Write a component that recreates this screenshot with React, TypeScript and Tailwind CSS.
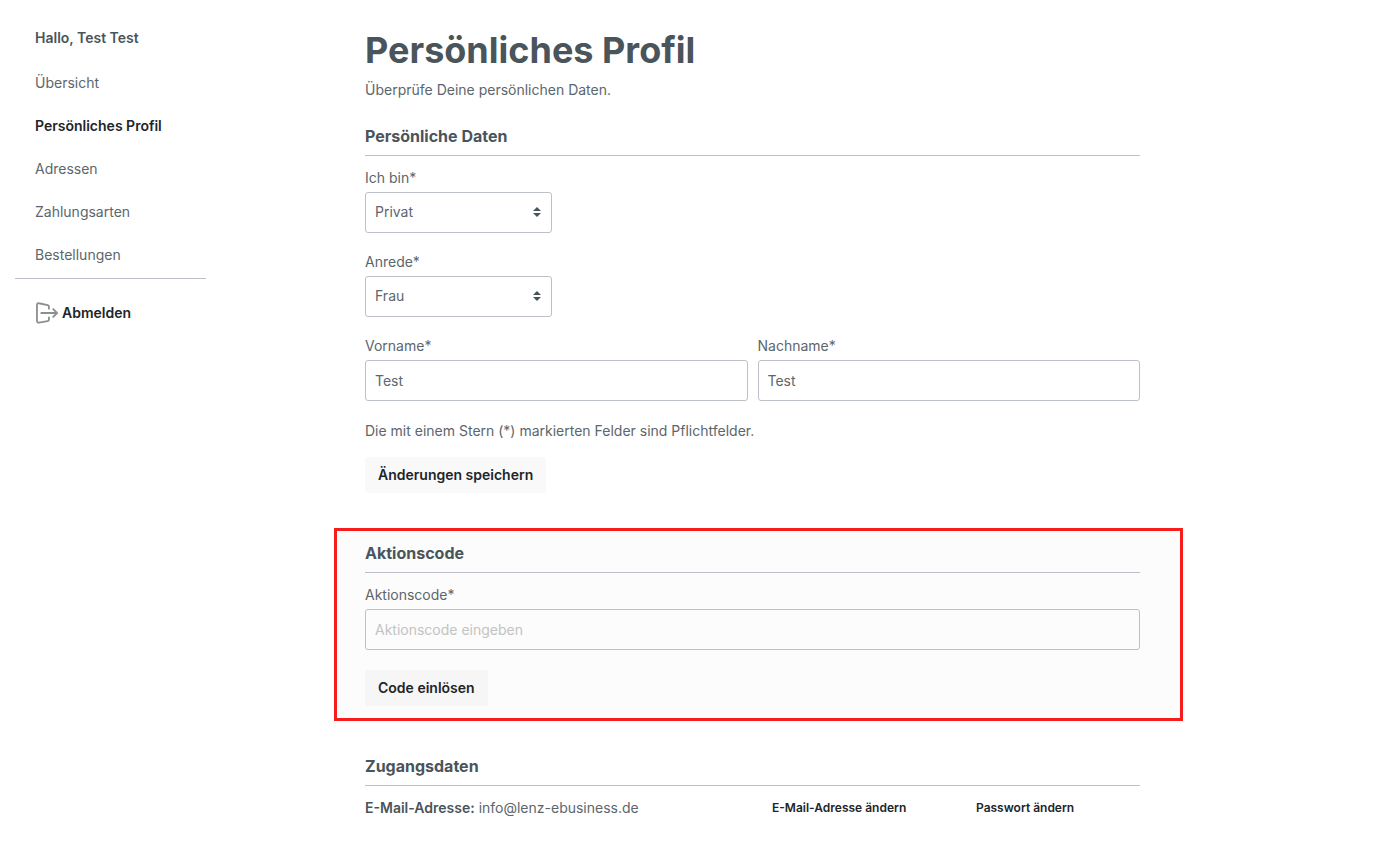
import { useState } from "react";
import type { InputHTMLAttributes, ReactNode, SelectHTMLAttributes } from "react";

const navItems = [
    { label: "Übersicht", href: "#uebersicht" },
    { label: "Persönliches Profil", href: "#profil", active: true },
    { label: "Adressen", href: "#adressen" },
    { label: "Zahlungsarten", href: "#zahlungsarten" },
    { label: "Bestellungen", href: "#bestellungen" },
];

const LogoutIcon = () => (
    <svg width="22" height="22" viewBox="0 0 23 23" fill="none" stroke="#8e8e8e" strokeWidth="1.9" strokeLinecap="round" strokeLinejoin="round" aria-hidden="true">
        <path d="M13.500 7V4.800a1.600 1.600 0 0 0-1.300-1.600L3 1.300A1.600 1.600 0 0 0 1 2.900v17a1.600 1.600 0 0 0 2 1.600l9.200-1.600a1.600 1.600 0 0 0 1.300-1.600V16" />
        <path d="M5.500 11.500h16M18 7.500l4 4-4 4" />
    </svg>
);

const SectionTitle = ({ children }: { children: ReactNode }) => (
    <h2 className="mb-3 border-b border-[#bcc1c7] pb-[9px] text-base/5 font-bold text-[#4a545b]">{children}</h2>
);

type SelectFieldProps = SelectHTMLAttributes<HTMLSelectElement> & { id: string; label: string; options: string[] };

const SelectField = ({ id, label, options, ...rest }: SelectFieldProps) => (
    <div className="mb-[19px]">
        <label htmlFor={id} className="mb-1 block">{label}</label>
        <div className="relative w-[187px]">
            <select id={id} className="h-[41px] w-full appearance-none rounded-[3px] border border-[#bcc1c7] bg-white px-[9px] pb-px" {...rest}>
                {options.map((option) => (
                    <option key={option}>{option}</option>
                ))}
            </select>
            <svg className="pointer-events-none absolute top-[15px] right-[11px]" width="8" height="10" viewBox="0 0 8 10" fill="#4a545b" aria-hidden="true">
                <path d="M4 0 8 4H0zM4 10 0 6h8z" />
            </svg>
        </div>
    </div>
);

type TextFieldProps = InputHTMLAttributes<HTMLInputElement> & { id: string; label: string };

const TextField = ({ id, label, ...rest }: TextFieldProps) => (
    <div className="flex-1">
        <label htmlFor={id} className="mb-1 block">{label}</label>
        <input id={id} type="text" className="h-[41px] w-full rounded-[3px] border border-[#bcc1c7] bg-transparent px-[9px] placeholder:text-[#c3c3c3]" {...rest} />
    </div>
);

const Sidebar = () => (
    <aside className="w-[191px] shrink-0 pt-7">
        <p className="mb-[25px] pl-5 font-semibold text-[#4a545b]">Hallo, Test Test</p>
        <nav>
            <ul className="flex flex-col gap-[23px] border-b border-[#bcc1c7] pb-[13px] pl-5">
                {navItems.map((item) => (
                    <li key={item.label}>
                        <a href={item.href} className={item.active ? "block font-semibold text-[#212529]" : "block"}>{item.label}</a>
                    </li>
                ))}
            </ul>
        </nav>
        <a href="#abmelden" className="mt-[23px] flex items-center gap-1 pl-[21px] font-semibold text-[#212529]">
            <LogoutIcon />
            Abmelden
        </a>
    </aside>
);

export default function App() {
    const [code, setCode] = useState("");

    return (
        <div className="flex gap-32 bg-white pr-4 pb-8 pl-[15px] font-['Inter',sans-serif] text-sm/5 text-[#5c666d]">
            <Sidebar />
            <main className="max-w-[849px] flex-1 pt-[30px]">
                <section className="pr-[43px] pl-[31px]">
                    <h1 className="text-4xl/10 font-bold text-[#4a545b]">Persönliches Profil</h1>
                    <p className="mt-[10px] mb-[26px]">Überprüfe Deine persönlichen Daten.</p>
                    <SectionTitle>Persönliche Daten</SectionTitle>
                    <form onSubmit={(e) => e.preventDefault()}>
                        <SelectField id="accountType" label="Ich bin*" options={["Privat", "Gewerblich"]} />
                        <SelectField id="salutation" label="Anrede*" options={["Frau", "Herr"]} />
                        <div className="flex gap-[10px]">
                            <TextField id="firstName" label="Vorname*" defaultValue="Test" />
                            <TextField id="lastName" label="Nachname*" defaultValue="Test" />
                        </div>
                        <p className="mt-5">Die mit einem Stern (*) markierten Felder sind Pflichtfelder.</p>
                        <button type="submit" className="mt-4 h-9 rounded-[3px] bg-[#f9f9f9] px-[13px] font-semibold text-[#212529]">Änderungen speichern</button>
                    </form>
                </section>

                <section className="mt-[35px] border-3 border-[#f91c1c] bg-[#fcfcfc] pt-3 pr-10 pb-3 pl-7">
                    <SectionTitle>Aktionscode</SectionTitle>
                    <form onSubmit={(e) => e.preventDefault()}>
                        <TextField id="promoCode" label="Aktionscode*" placeholder="Aktionscode eingeben" value={code} onChange={(e) => setCode(e.target.value)} />
                        <button type="submit" className="mt-5 h-9 rounded-[3px] bg-[#f6f6f6] px-[13px] font-semibold text-[#212529]">Code einlösen</button>
                    </form>
                </section>

                <section className="mt-[35px] pr-[43px] pl-[31px]">
                    <SectionTitle>Zugangsdaten</SectionTitle>
                    <div className="flex items-center">
                        <p className="w-[407px]"><strong className="font-semibold text-[#4a545b]">E-Mail-Adresse:</strong> info@lenz-ebusiness.de</p>
                        <button type="button" className="w-[204px] text-left text-xs/5 font-semibold text-[#212529]">E-Mail-Adresse ändern</button>
                        <button type="button" className="text-xs/5 font-semibold text-[#212529]">Passwort ändern</button>
                    </div>
                </section>
            </main>
        </div>
    );
}
